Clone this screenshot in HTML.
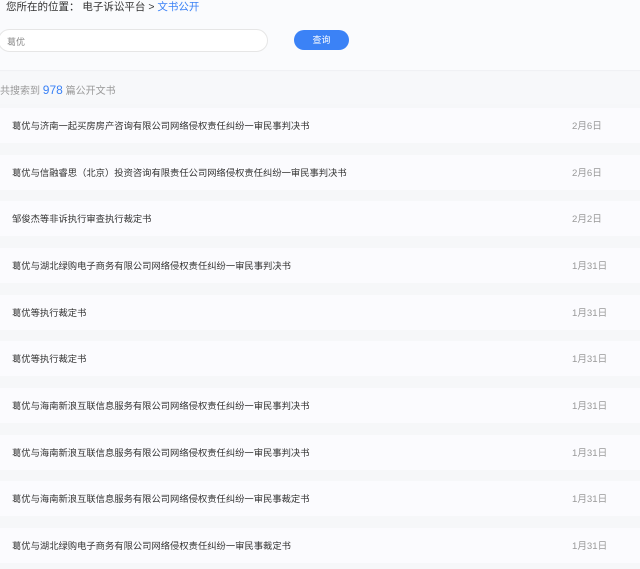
<!DOCTYPE html>
<html><head><meta charset="utf-8"><style>
*{margin:0;padding:0;box-sizing:border-box}
body{width:640px;height:569px;overflow:hidden;background:#f6f7f9;font-family:"Liberation Sans","Noto Sans CJK SC",sans-serif;position:relative}
.top{position:absolute;left:0;top:0;width:640px;height:71px;background:#fafbfd;border-bottom:1px solid #f0f1f4}
.crumb{position:absolute;left:6px;top:0;font-size:10.5px;color:#333;line-height:14px}
.crumb span{color:#3b82f6}
.inp{position:absolute;left:-2px;top:29px;width:270px;height:23px;border:1px solid #e6e6e6;border-radius:12px;background:#fff;font-size:9px;color:#888;padding:5px 8px}
.btn{position:absolute;left:294px;top:30px;width:55px;height:20px;border-radius:10px;background:#3b82f6;color:#fff;font-size:9px;text-align:center;line-height:20px}
.cnt{position:absolute;left:0;top:72px;width:640px;height:32px;background:#f7f8fa;font-size:10px;color:#999;line-height:36px}
.cnt span{color:#3b82f6;font-size:12px}
.row{position:absolute;left:0;width:640px;height:35px;background:#fbfbfe;font-size:9.3px;color:#333;line-height:37px}
.row .t{position:absolute;left:12px}
.row .d{position:absolute;left:572px;color:#999;font-size:9.6px}
</style></head><body>
<div class="top">
<div class="crumb">您所在的位置： 电子诉讼平台 &gt; <span>文书公开</span></div>
<div class="inp">葛优</div>
<div class="btn">查询</div>
</div>
<div class="cnt">共搜索到 <span>978</span> 篇公开文书</div>
<div class="row" style="top:108px"><span class="t">葛优与济南一起买房房产咨询有限公司网络侵权责任纠纷一审民事判决书</span><span class="d">2月6日</span></div>
<div class="row" style="top:155px"><span class="t">葛优与信融睿思（北京）投资咨询有限责任公司网络侵权责任纠纷一审民事判决书</span><span class="d">2月6日</span></div>
<div class="row" style="top:201px"><span class="t">邹俊杰等非诉执行审查执行裁定书</span><span class="d">2月2日</span></div>
<div class="row" style="top:248px"><span class="t">葛优与湖北绿购电子商务有限公司网络侵权责任纠纷一审民事判决书</span><span class="d">1月31日</span></div>
<div class="row" style="top:295px"><span class="t">葛优等执行裁定书</span><span class="d">1月31日</span></div>
<div class="row" style="top:341px"><span class="t">葛优等执行裁定书</span><span class="d">1月31日</span></div>
<div class="row" style="top:388px"><span class="t">葛优与海南新浪互联信息服务有限公司网络侵权责任纠纷一审民事判决书</span><span class="d">1月31日</span></div>
<div class="row" style="top:435px"><span class="t">葛优与海南新浪互联信息服务有限公司网络侵权责任纠纷一审民事判决书</span><span class="d">1月31日</span></div>
<div class="row" style="top:481px"><span class="t">葛优与海南新浪互联信息服务有限公司网络侵权责任纠纷一审民事裁定书</span><span class="d">1月31日</span></div>
<div class="row" style="top:528px"><span class="t">葛优与湖北绿购电子商务有限公司网络侵权责任纠纷一审民事裁定书</span><span class="d">1月31日</span></div>
</body></html>
